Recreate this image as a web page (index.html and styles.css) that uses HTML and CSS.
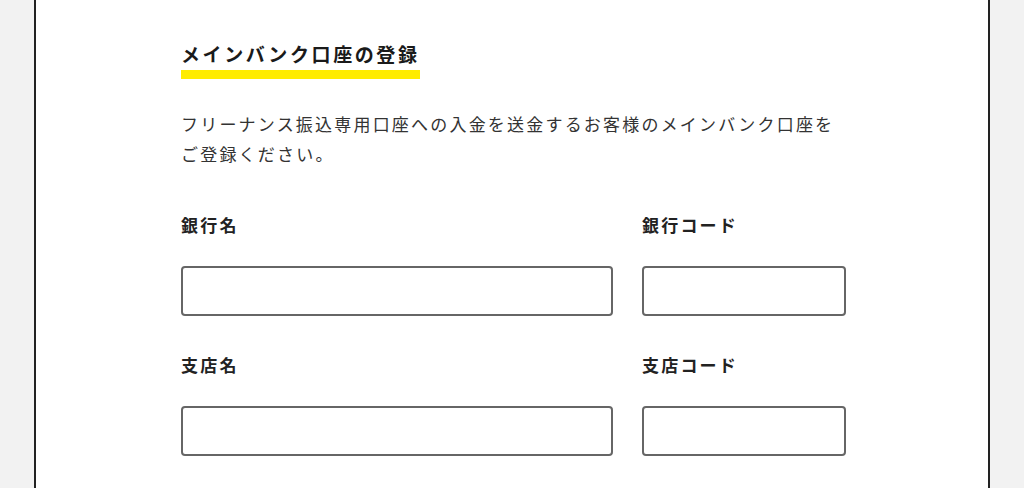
FILE: index.html
```
<!DOCTYPE html>
<html lang="ja">
<head>
    <meta charset="UTF-8">
    <meta name="viewport" content="width=device-width, initial-scale=1.0">
    <title>メインバンク口座の登録</title>
    <link rel="stylesheet" href="styles.css">
</head>
<body>
    <div class="card">
        <div class="form-area">
            <h2 class="title">メインバンク口座の登録</h2>

            <p class="lead">フリーナンス振込専用口座への入金を送金するお客様のメインバンク口座をご登録ください。</p>

            <div class="form-row">
                <div class="field">
                    <label for="bank-name">銀行名</label>
                    <input type="text" id="bank-name">
                </div>
                <div class="field">
                    <label for="bank-code">銀行コード</label>
                    <input type="text" id="bank-code">
                </div>
            </div>

            <div class="form-row">
                <div class="field">
                    <label for="branch-name">支店名</label>
                    <input type="text" id="branch-name">
                </div>
                <div class="field">
                    <label for="branch-code">支店コード</label>
                    <input type="text" id="branch-code">
                </div>
            </div>
        </div>
    </div>
</body>
</html>
```

FILE: styles.css
```
body {
    margin: 0;
    background-color: #f2f2f2;
    font-family: "Noto Sans CJK JP", sans-serif;
    color: #222;
}

.card {
    box-sizing: border-box;
    width: 956px;
    min-height: 488px;
    margin: 0 auto;
    padding: 41px 0 0 145px;
    background-color: #fff;
    border-left: 2px solid #222;
    border-right: 2px solid #222;
}

.form-area {
    width: 665px;
}

.title {
    display: inline-block;
    margin: 0;
    padding-bottom: 3px;
    font-size: 19px;
    line-height: 26px;
    font-weight: bold;
    letter-spacing: 2.6px;
    color: #1a1a1a;
    border-bottom: 9px solid #ffec00; /* yellow marker line */
}

.lead {
    margin: 30px 0 0;
    font-size: 17px;
    line-height: 30px;
    letter-spacing: 2.2px;
    color: #333;
}

.form-row {
    display: grid;
    grid-template-columns: 1fr 204px;
    gap: 29px;
    margin-top: 44px;
}

.form-row + .form-row {
    margin-top: 37px;
}

.field label {
    display: block;
    margin-bottom: 29px;
    font-size: 17px;
    line-height: 24px;
    font-weight: bold;
    letter-spacing: 2.2px;
}

.field input {
    display: block;
    box-sizing: border-box;
    width: 100%;
    height: 50px;
    padding: 0 12px;
    border: 2px solid #666;
    border-radius: 4px;
    font-size: 16px;
}
```
